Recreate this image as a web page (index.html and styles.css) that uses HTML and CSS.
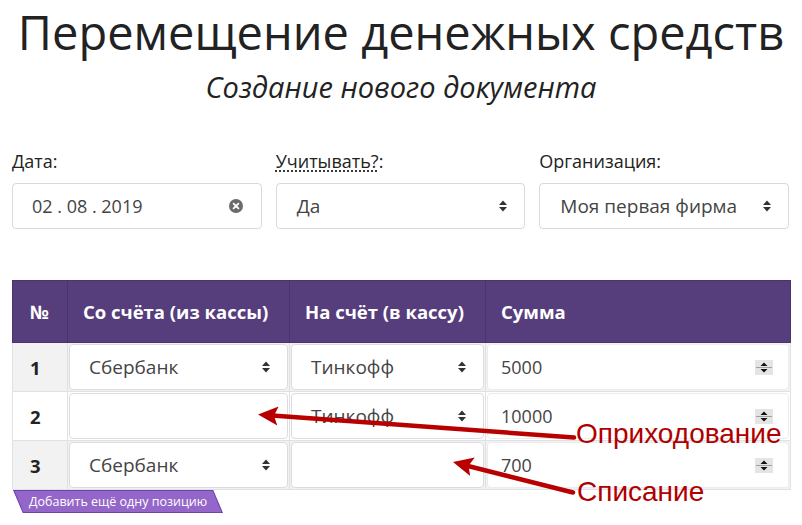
FILE: index.html
```html
<!DOCTYPE html>
<html lang="ru">
<head>
<meta charset="utf-8">
<title>Перемещение денежных средств</title>
<link rel="stylesheet" href="styles.css">
</head>
<body>
<div class="page">
  <h1 class="title">Перемещение денежных средств</h1>
  <p class="subtitle">Создание нового документа</p>

  <div class="fields">
    <div class="field">
      <div class="label">Дата:</div>
      <div class="control">
        <span class="val date">02 . 08 . 2019</span>
        <svg class="clear" width="14" height="14" viewBox="0 0 14 14"><circle cx="7" cy="7" r="7" fill="#6b6b6b"/><path d="M4.6 4.6L9.4 9.4M9.4 4.6L4.6 9.4" stroke="#fff" stroke-width="1.8" stroke-linecap="round"/></svg>
      </div>
    </div>
    <div class="field">
      <div class="label"><span class="abbr">Учитывать?</span>:</div>
      <div class="control">
        <span class="val">Да</span>
        <svg class="caret" width="8" height="12" viewBox="0 0 8 12"><path d="M0 5L4 0.5L8 5Z M0 7L4 11.5L8 7Z" fill="#333"/></svg>
      </div>
    </div>
    <div class="field">
      <div class="label">Организация:</div>
      <div class="control">
        <span class="val">Моя первая фирма</span>
        <svg class="caret" width="8" height="12" viewBox="0 0 8 12"><path d="M0 5L4 0.5L8 5Z M0 7L4 11.5L8 7Z" fill="#333"/></svg>
      </div>
    </div>
  </div>

  <div class="table-area">
    <table class="grid">
      <colgroup>
        <col class="c-num"><col class="c-from"><col class="c-to"><col class="c-sum">
      </colgroup>
      <thead>
        <tr><th>№</th><th>Со счёта (из кассы)</th><th>На счёт (в кассу)</th><th>Сумма</th></tr>
      </thead>
      <tbody>
        <tr class="odd">
          <td class="num">1</td>
          <td><div class="cell-input sel"><span>Сбербанк</span><svg class="caret" width="8" height="12" viewBox="0 0 8 12"><path d="M0 5L4 0.5L8 5Z M0 7L4 11.5L8 7Z" fill="#333"/></svg></div></td>
          <td><div class="cell-input sel"><span>Тинкофф</span><svg class="caret" width="8" height="12" viewBox="0 0 8 12"><path d="M0 5L4 0.5L8 5Z M0 7L4 11.5L8 7Z" fill="#333"/></svg></div></td>
          <td><div class="cell-input numin"><span>5000</span><svg class="spin" width="18" height="15" viewBox="0 0 18 15"><rect x="0" y="0" width="18" height="15" fill="#e4e4e4"/><line x1="1" y1="7.5" x2="17" y2="7.5" stroke="#a0a0a0"/><path d="M5.5 6L9 2.5L12.5 6Z M5.5 9L9 12.5L12.5 9Z" fill="#111"/></svg></div></td>
        </tr>
        <tr>
          <td class="num">2</td>
          <td><div class="cell-input sel"></div></td>
          <td><div class="cell-input sel"><span>Тинкофф</span><svg class="caret" width="8" height="12" viewBox="0 0 8 12"><path d="M0 5L4 0.5L8 5Z M0 7L4 11.5L8 7Z" fill="#333"/></svg></div></td>
          <td><div class="cell-input numin"><span>10000</span><svg class="spin" width="18" height="15" viewBox="0 0 18 15"><rect x="0" y="0" width="18" height="15" fill="#e4e4e4"/><line x1="1" y1="7.5" x2="17" y2="7.5" stroke="#a0a0a0"/><path d="M5.5 6L9 2.5L12.5 6Z M5.5 9L9 12.5L12.5 9Z" fill="#111"/></svg></div></td>
        </tr>
        <tr class="odd">
          <td class="num">3</td>
          <td><div class="cell-input sel"><span>Сбербанк</span><svg class="caret" width="8" height="12" viewBox="0 0 8 12"><path d="M0 5L4 0.5L8 5Z M0 7L4 11.5L8 7Z" fill="#333"/></svg></div></td>
          <td><div class="cell-input sel"></div></td>
          <td><div class="cell-input numin"><span>700</span><svg class="spin" width="18" height="15" viewBox="0 0 18 15"><rect x="0" y="0" width="18" height="15" fill="#e4e4e4"/><line x1="1" y1="7.5" x2="17" y2="7.5" stroke="#a0a0a0"/><path d="M5.5 6L9 2.5L12.5 6Z M5.5 9L9 12.5L12.5 9Z" fill="#111"/></svg></div></td>
        </tr>
      </tbody>
    </table>
    <div class="add"><span>Добавить ещё одну позицию</span></div>
  </div>
</div>

<svg class="annot" width="802" height="525" viewBox="0 0 802 525">
  <line x1="574" y1="437.5" x2="272" y2="415.5" stroke="#b80000" stroke-width="4.5" stroke-linecap="round"/>
  <path d="M258 414.5 L278.6 406.4 L274 415.7 L277.3 425.4 Z" fill="#b80000"/>
  <line x1="573" y1="492.5" x2="466" y2="465.5" stroke="#b80000" stroke-width="4.5" stroke-linecap="round"/>
  <path d="M453 462 L474.8 457.6 L468.5 465.7 L470.2 476 Z" fill="#b80000"/>
</svg>
<span class="note note-in">Оприходование</span>
<span class="note note-out">Списание</span>
</body>
</html>
```

FILE: styles.css
```css
* { box-sizing: border-box; }
html, body { margin: 0; padding: 0; background: #fff; }
body {
  font-family: "Open Sans", "Noto Sans", sans-serif;
  color: #212529;
  width: 802px;
  height: 525px;
  overflow: hidden;
  position: relative;
}
.page { padding: 0 12px; }

.title {
  margin: 4px 0 0;
  font-size: 47px;
  line-height: 56px;
  font-weight: 400;
  text-align: center;
  color: #222;
}
.subtitle {
  margin: 10px 0 0;
  font-size: 29px;
  line-height: 34px;
  font-style: italic;
  text-align: center;
  color: #222;
}

.fields {
  display: grid;
  grid-template-columns: repeat(3, 1fr);
  column-gap: 14px;
  margin-top: 45px;
  width: 777px;
}
.label {
  font-size: 18px;
  line-height: 24px;
  color: #222;
  margin-bottom: 10px;
}
.abbr {
  text-decoration: underline dotted;
  text-underline-offset: 3px;
}
.control {
  height: 46px;
  border: 1px solid #d9d9d9;
  border-radius: 4px;
  display: flex;
  align-items: center;
  justify-content: space-between;
  padding: 0 17px 0 20px;
  font-size: 19px;
  color: #444;
}
.control .date { font-size: 18px; margin-left: -1px; }
.control .clear { margin-right: 1px; }

.table-area { margin-top: 51px; position: relative; }
.grid {
  width: 778px;
  border-collapse: collapse;
  table-layout: fixed;
}
.c-num { width: 55px; }
.c-from { width: 222px; }
.c-to { width: 196px; }
.c-sum { width: 305px; }
.grid thead th {
  background: #563d7c;
  color: #fff;
  font-size: 18.5px;
  font-weight: 700;
  text-align: left;
  height: 62px;
  padding: 0 0 0 15px;
  border: 1px solid #4a3469;
}
.grid thead th:first-child { padding-left: 17px; }
.grid tbody td {
  height: 49px;
  padding: 1px;
  border: 1px solid #dee2e6;
}
.grid tbody tr.odd td { background: #f2f2f2; }
.grid td.num {
  padding-left: 17px;
  font-weight: 700;
  font-size: 18.5px;
  color: #222;
}
.cell-input {
  height: 46px;
  background: #fff;
  border: 1px solid #dcdcdc;
  border-radius: 4px;
  display: flex;
  align-items: center;
  justify-content: space-between;
  font-size: 19px;
  color: #444;
}
.cell-input.sel { padding: 0 17px 0 19px; }
.cell-input.numin { padding: 0 15px 0 13px; border-color: #ececec; font-size: 18px; }

.add {
  position: relative;
  width: 200px;
  height: 23px;
  margin-left: 6px;
  display: flex;
  align-items: center;
  justify-content: center;
  font-size: 12.5px;
  color: #fff;
}
.add::before {
  content: "";
  position: absolute;
  inset: 0;
  background: #9466c9;
  border: 1px solid #6b45a8;
  transform: skewX(23deg);
  z-index: 0;
}
.add span { position: relative; z-index: 1; }

.annot {
  position: absolute;
  left: 0;
  top: 0;
  pointer-events: none;
}
.note {
  position: absolute;
  font-family: "Liberation Sans", Arial, sans-serif;
  font-size: 28px;
  line-height: 28px;
  color: #b00000;
  white-space: nowrap;
}
.note-in { left: 576px; top: 420px; }
.note-out { left: 577px; top: 478px; }
```
